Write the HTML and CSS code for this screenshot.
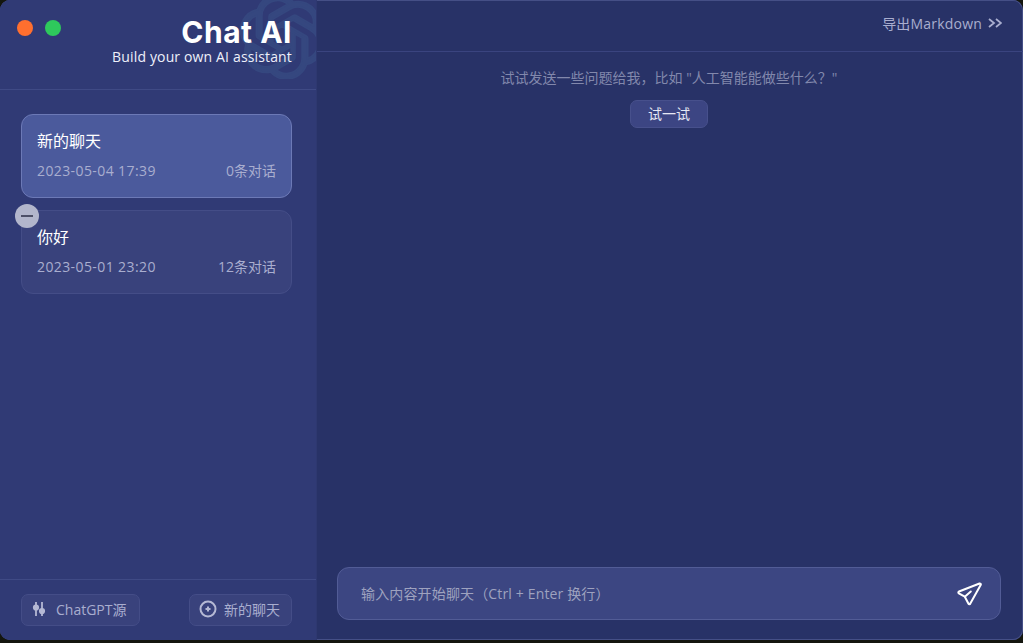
FILE: index.html
```html
<!DOCTYPE html>
<html>
<head>
  <meta charset="utf-8">
  <title>Chat AI</title>
  <link rel="stylesheet" href="styles.css">
</head>
<body>
  <div class="window">
    <div class="sidebar">
      <div class="brand">
        <svg class="brand-mark" viewBox="0 0 24 24"><path d="M22.2819 9.8211a5.9847 5.9847 0 0 0-.5157-4.9108 6.0462 6.0462 0 0 0-6.5098-2.9A6.0651 6.0651 0 0 0 4.9807 4.1818a5.9847 5.9847 0 0 0-3.9977 2.9 6.0462 6.0462 0 0 0 .7427 7.0966 5.98 5.98 0 0 0 .511 4.9107 6.051 6.051 0 0 0 6.5146 2.9001A5.9847 5.9847 0 0 0 13.2599 24a6.0557 6.0557 0 0 0 5.7718-4.2058 5.9894 5.9894 0 0 0 3.9977-2.9001 6.0557 6.0557 0 0 0-.7475-7.0729zm-9.022 12.6081a4.4755 4.4755 0 0 1-2.8764-1.0408l.1419-.0804 4.7783-2.7582a.7948.7948 0 0 0 .3927-.6813v-6.7369l2.02 1.1686a.071.071 0 0 1 .038.052v5.5826a4.504 4.504 0 0 1-4.4945 4.4944zm-9.6607-4.1254a4.4708 4.4708 0 0 1-.5346-3.0137l.142.0852 4.783 2.7582a.7712.7712 0 0 0 .7806 0l5.8428-3.3685v2.3324a.0804.0804 0 0 1-.0332.0615L9.74 19.9502a4.4992 4.4992 0 0 1-6.1408-1.6464zM2.3408 7.8956a4.485 4.485 0 0 1 2.3655-1.9728V11.6a.7664.7664 0 0 0 .3879.6765l5.8144 3.3543-2.0201 1.1685a.0757.0757 0 0 1-.071 0l-4.8303-2.7865A4.504 4.504 0 0 1 2.3408 7.872zm16.5963 3.8558L13.1038 8.364 15.1192 7.2a.0757.0757 0 0 1 .071 0l4.8303 2.7913a4.4944 4.4944 0 0 1-.6765 8.1042v-5.6772a.79.79 0 0 0-.407-.667zm2.0107-3.0231l-.142-.0852-4.7735-2.7818a.7759.7759 0 0 0-.7854 0L9.409 9.2297V6.8974a.0662.0662 0 0 1 .0284-.0615l4.8303-2.7866a4.4992 4.4992 0 0 1 6.6802 4.66zM8.3065 12.863l-2.02-1.1638a.0804.0804 0 0 1-.038-.0567V6.0742a4.4992 4.4992 0 0 1 7.3757-3.4537l-.142.0805L8.704 5.459a.7948.7948 0 0 0-.3927.6813zm1.0976-2.3654l2.602-1.4998 2.6069 1.4998v2.9994l-2.5974 1.4997-2.6067-1.4997Z"/></svg>
        <div class="dots">
          <span class="dot dot-close"></span>
          <span class="dot dot-zoom"></span>
        </div>
        <div class="brand-text">
          <div class="brand-title">Chat AI</div>
          <div class="brand-sub">Build your own AI assistant</div>
        </div>
      </div>

      <div class="chat-list">
        <div class="chat-card active">
          <div class="chat-title">新的聊天</div>
          <div class="chat-meta"><span class="chat-date">2023-05-04 17:39</span><span>0条对话</span></div>
        </div>
        <div class="chat-card">
          <button class="chat-delete"><span></span></button>
          <div class="chat-title">你好</div>
          <div class="chat-meta"><span class="chat-date">2023-05-01 23:20</span><span>12条对话</span></div>
        </div>
      </div>

      <div class="sidebar-footer">
        <button class="tool-button">
          <svg class="icon-sliders" viewBox="0 0 16 16">
            <path d="M5 1v14M11 1v14"/>
            <circle cx="5" cy="6.500" r="2.200"/>
            <circle cx="11" cy="10" r="2.200"/>
          </svg>
          ChatGPT源
        </button>
        <button class="tool-button new-chat">
          <svg class="icon-plus" viewBox="0 0 18 18">
            <circle class="ring" cx="9" cy="9" r="7.500"/>
            <path class="cross" d="M9 6.500v5M6.500 9h5"/>
          </svg>
          新的聊天
        </button>
      </div>
    </div>

    <div class="main">
      <div class="main-header">
        <span>导出Markdown</span>
        <svg class="icon-chevrons" viewBox="0 0 14 10"><path d="M1 1l5 4-5 4M8 1l5 4-5 4"/></svg>
      </div>
      <div class="messages">
        <p class="hint">试试发送一些问题给我，比如 "人工智能能做些什么？"</p>
        <button class="try-button">试一试</button>
      </div>
      <div class="composer">
        <div class="input-box">
          <span class="placeholder">输入内容开始聊天（Ctrl + Enter 换行）</span>
          <svg class="icon-send" viewBox="0 0 26 26">
            <path d="M23.500 2.500L3 10.500c-.8.3-.9 1.300-.2 1.800l6 3.400 3.700 7c.4.800 1.500.700 1.800-.100L24.800 3.800c.3-.9-.5-1.600-1.300-1.300z"/>
            <path d="M8.800 15.700l6-5.200"/>
          </svg>
        </div>
      </div>
    </div>
  </div>
</body>
</html>
```

FILE: styles.css
```css
:root {
  --sidebar-bg: #303a75;
  --main-bg: #283267;
  --line: #3f4a85;
  --muted: #a9aecf;
}

* {
  margin: 0;
  padding: 0;
  box-sizing: border-box;
  font-family: "Open Sans", "Noto Sans CJK SC", sans-serif;
}

body {
  width: 1023px;
  height: 643px;
  background-color: #14160f;
  overflow: hidden;
}

button {
  border: none;
  background: none;
  cursor: pointer;
}

.window {
  display: flex;
  width: 1023px;
  height: 640px;
  border-radius: 10px;
  overflow: hidden;
  background-color: var(--main-bg);
  box-shadow: inset 0 0 0 1px #454f86;
}

/* sidebar */
.sidebar {
  width: 317px;
  flex-shrink: 0;
  display: flex;
  flex-direction: column;
  background-color: var(--sidebar-bg);
  border-right: 1px solid #2e3870;
}

.brand {
  position: relative;
  height: 90px;
  flex-shrink: 0;
  display: flex;
  justify-content: space-between;
  padding: 17px 24px 0 17px;
  border-bottom: 1px solid var(--line);
  overflow: hidden;
}

.brand-mark {
  position: absolute;
  top: -5px;
  left: 240px;
  width: 84px;
  height: 84px;
  fill: #35477f;
  stroke: #35477f;
  stroke-width: 0.5;
}

.dots {
  position: relative;
  display: flex;
  gap: 12px;
  padding-top: 3px;
}

.dot {
  width: 16px;
  height: 16px;
  border-radius: 50%;
}

.dot-close {
  background-color: #ff6f2f;
}

.dot-zoom {
  background-color: #2ec95c;
}

.brand-text {
  position: relative;
  text-align: right;
  color: #fff;
}

.brand-title {
  font-family: "Inter", sans-serif;
  font-size: 30px;
  font-weight: 700;
  line-height: 30px;
  letter-spacing: 0.5px;
}

.brand-sub {
  font-size: 14px;
  line-height: 20px;
  letter-spacing: 0.15px;
  color: #eef0fa;
}

.chat-list {
  flex: 1;
  display: flex;
  flex-direction: column;
  gap: 12px;
  padding: 24px 24px 0 21px;
}

.chat-card {
  position: relative;
  height: 84px;
  padding: 15px 15px 0;
  border-radius: 12px;
  background-color: #39427c;
  border: 1px solid #444d87;
}

.chat-card.active {
  background-color: #4b5a9c;
  border-color: #6c79b6;
}

.chat-title {
  font-size: 16px;
  line-height: 22px;
  color: #fff;
}

.chat-meta {
  display: flex;
  justify-content: space-between;
  margin-top: 9px;
  font-size: 14px;
  line-height: 20px;
  color: var(--muted);
}

.chat-date {
  letter-spacing: 0.4px;
}

.chat-delete {
  position: absolute;
  top: -7px;
  left: -7px;
  width: 24px;
  height: 24px;
  border-radius: 50%;
  background-color: #b2b6cc;
  display: flex;
  align-items: center;
  justify-content: center;
}

.chat-delete span {
  width: 12px;
  height: 2px;
  background-color: #4d5068;
}

.sidebar-footer {
  height: 61px;
  flex-shrink: 0;
  display: flex;
  justify-content: space-between;
  padding: 14px 24px 0 21px;
  border-top: 1px solid var(--line);
}

.tool-button {
  height: 32px;
  width: 119px;
  display: flex;
  align-items: center;
  gap: 9px;
  padding: 0 0 2px 9px;
  border-radius: 7px;
  background-color: #39427c;
  border: 1px solid #444d87;
  font-size: 14px;
  color: var(--muted);
}

.tool-button.new-chat {
  width: 103px;
  gap: 7px;
}

.icon-sliders {
  width: 16px;
  height: 16px;
  fill: #b5b9d4;
  stroke: #b5b9d4;
  stroke-width: 1.8;
}

.icon-plus {
  width: 18px;
  height: 18px;
  fill: none;
  stroke: #b5b9d4;
}

.icon-plus .ring {
  stroke-width: 2;
}

.icon-plus .cross {
  stroke-width: 2;
}

/* main column */
.main {
  flex: 1;
  display: flex;
  flex-direction: column;
  min-width: 0;
}

.main-header {
  height: 52px;
  flex-shrink: 0;
  display: flex;
  align-items: center;
  justify-content: flex-end;
  gap: 6px;
  padding: 0 21px 6px 0;
  border-bottom: 1px solid #3a447f;
  font-size: 14px;
  letter-spacing: 0.2px;
  color: var(--muted);
}

.icon-chevrons {
  width: 14px;
  height: 10px;
  fill: none;
  stroke: var(--muted);
  stroke-width: 1.8;
}

.messages {
  flex: 1;
  display: flex;
  flex-direction: column;
  align-items: center;
  padding: 16px 2px 0 0;
}

.hint {
  font-size: 14px;
  line-height: 20px;
  color: #8288ac;
}

.try-button {
  width: 78px;
  height: 28px;
  margin-top: 12px;
  padding-bottom: 2px;
  border-radius: 7px;
  background-color: #3c4583;
  border: 1px solid #47508c;
  font-size: 14px;
  color: #e6e8f4;
}

.composer {
  padding: 0 22px 20px 20px;
}

.input-box {
  height: 53px;
  display: flex;
  align-items: center;
  justify-content: space-between;
  padding: 0 18px 0 23px;
  border-radius: 12px;
  background-color: #3c4682;
  border: 1px solid #525c96;
}

.placeholder {
  font-size: 14px;
  letter-spacing: 0.15px;
  padding-bottom: 2px;
  color: #9ea2bf;
}

.icon-send {
  width: 26px;
  height: 26px;
  fill: none;
  stroke: #fff;
  stroke-width: 2;
  stroke-linecap: round;
  stroke-linejoin: round;
}
```
